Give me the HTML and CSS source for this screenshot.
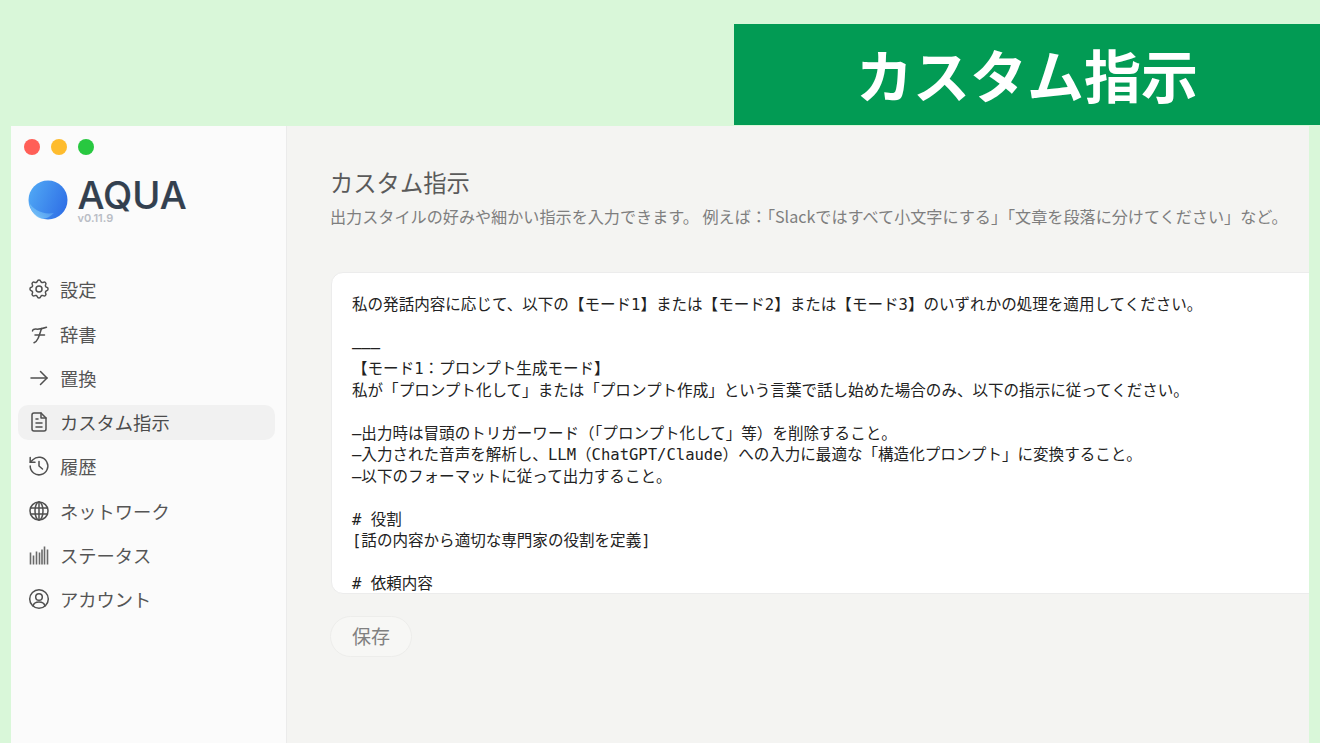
FILE: index.html
```html
<!DOCTYPE html>
<html lang="ja">
<head>
<meta charset="utf-8">
<title>カスタム指示</title>
<link rel="stylesheet" href="styles.css">
</head>
<body>
<header class="top">
  <div class="banner">カスタム指示</div>
</header>
<div class="window">
  <aside class="sidebar">
    <div class="lights">
      <span class="light red"></span><span class="light yellow"></span><span class="light green"></span>
    </div>
    <div class="brand">
      <svg class="orb" viewBox="0 0 40 40" aria-hidden="true">
        <defs>
          <linearGradient id="orbg" x1="0" y1="0.3" x2="1" y2="0.7">
            <stop offset="0" stop-color="#4fa6f4"/><stop offset="1" stop-color="#2f6fe6"/>
          </linearGradient>
          <linearGradient id="orbr" x1="0" y1="1" x2="1" y2="0">
            <stop offset="0" stop-color="#7cc6f8"/><stop offset="1" stop-color="#7cc6f8" stop-opacity="0"/>
          </linearGradient>
        </defs>
        <circle cx="20" cy="20" r="19.5" fill="url(#orbg)"/>
        <path d="M1 22c4 8 14 13 25 11-4 4-9 6.500-13 5.500C7 37 2 30 1 22z" fill="url(#orbr)"/>
      </svg>
      <div class="brand-text">
        <div class="brand-name">AQUA</div>
        <div class="brand-ver">v0.11.9</div>
      </div>
    </div>
    <nav class="nav">
      <a class="item"><svg class="ico" viewBox="0 0 24 24"><path d="M10.300 4.300c.4-1.800 3-1.800 3.400 0a1.700 1.700 0 0 0 2.600 1c1.500-.9 3.300.8 2.400 2.400a1.700 1.700 0 0 0 1 2.600c1.800.4 1.800 3 0 3.400a1.700 1.700 0 0 0-1 2.600c.9 1.500-.8 3.300-2.400 2.400a1.700 1.700 0 0 0-2.600 1c-.4 1.800-3 1.800-3.400 0a1.700 1.700 0 0 0-2.600-1c-1.500.9-3.300-.8-2.400-2.400a1.700 1.700 0 0 0-1-2.600c-1.800-.4-1.800-3 0-3.400a1.700 1.700 0 0 0 1-2.600c-.9-1.500.8-3.300 2.400-2.400a1.700 1.700 0 0 0 2.600-1z"/><circle cx="12" cy="12" r="3"/></svg><span>設定</span></a>
      <a class="item"><svg class="ico" viewBox="0 0 24 24"><path d="M5.500 9c0-1.500 1.500-2 3.500-1.900 3.500.2 7-.5 10.500-1.800"/><path d="M8 13h9.500"/><path d="M14.500 6.500c-1 3-2.300 7.500-3.500 10-.9 2-2.300 3.500-4 4.200"/></svg><span>辞書</span></a>
      <a class="item"><svg class="ico" viewBox="0 0 24 24"><path d="M4 12h16"/><path d="M13.500 5.500 20 12l-6.500 6.500"/></svg><span>置換</span></a>
      <a class="item active"><svg class="ico" viewBox="0 0 24 24"><path d="M14 3H7a2 2 0 0 0-2 2v14a2 2 0 0 0 2 2h10a2 2 0 0 0 2-2V8z"/><path d="M14 3v5h5"/><path d="M9 9h2M9 13h6M9 17h6"/></svg><span>カスタム指示</span></a>
      <a class="item"><svg class="ico" viewBox="0 0 24 24"><path d="M3.200 12a8.800 8.800 0 1 0 2.700-6.300L3.200 8.300"/><path d="M3.200 3.500v4.800H8"/><path d="M12 7.500V12l3.500 3"/></svg><span>履歴</span></a>
      <a class="item"><svg class="ico" viewBox="0 0 24 24"><circle cx="12" cy="12" r="9"/><ellipse cx="12" cy="12" rx="4" ry="9"/><path d="M3.500 9h17M3.500 15h17M12 3v18"/></svg><span>ネットワーク</span></a>
      <a class="item"><svg class="ico bars" viewBox="0 0 24 24"><path d="M3.500 9.500v12M6.500 12.500v9M9.500 8.500v13M12.500 9.500v12M15 6.500v15M17.500 3.500v18M20.500 6.500v15"/></svg><span>ステータス</span></a>
      <a class="item"><svg class="ico" viewBox="0 0 24 24"><circle cx="12" cy="12" r="9.300"/><circle cx="12" cy="10" r="3.300"/><path d="M6 19c.6-2.600 2.600-4 6-4s5.400 1.400 6 4"/></svg><span>アカウント</span></a>
    </nav>
  </aside>
  <main class="main">
    <h1 class="title">カスタム指示</h1>
    <p class="sub">出力スタイルの好みや細かい指示を入力できます。 例えば：「Slackではすべて小文字にする」「文章を段落に分けてください」など。</p>
    <div class="card"><pre class="prompt">私の発話内容に応じて、以下の【モード1】または【モード2】または【モード3】のいずれかの処理を適用してください。

–––
【モード1：プロンプト生成モード】
私が「プロンプト化して」または「プロンプト作成」という言葉で話し始めた場合のみ、以下の指示に従ってください。

–出力時は冒頭のトリガーワード（「プロンプト化して」等）を削除すること。
–入力された音声を解析し、LLM（ChatGPT/Claude）への入力に最適な「構造化プロンプト」に変換すること。
–以下のフォーマットに従って出力すること。

# 役割
[話の内容から適切な専門家の役割を定義]

# 依頼内容</pre></div>
    <button class="save" type="button">保存</button>
  </main>
</div>
</body>
</html>
```
FILE: styles.css
```css
* { box-sizing: border-box; }
html, body { margin: 0; height: 743px; overflow: hidden; }
body {
  background: #d9f7d9;
  font-family: "Noto Sans CJK JP", "Noto Sans", sans-serif;
  display: flex;
  flex-direction: column;
}
.top {
  height: 126px;
  padding-top: 24px;
  display: flex;
  justify-content: flex-end;
  flex: none;
}
.banner {
  width: 586px;
  height: 101px;
  padding-bottom: 4px;
  background: #029b54;
  color: #fff;
  font-size: 57px;
  font-weight: 700;
  display: flex;
  align-items: center;
  justify-content: center;
}
.window {
  flex: 1;
  margin: 0 11px;
  display: flex;
  overflow: hidden;
  background: #f4f4f2;
}
.sidebar {
  width: 276px;
  flex: none;
  background: #fbfbfb;
  border-right: 1px solid #ebebeb;
  padding: 13px 11px 0 7px;
}
.lights { display: flex; gap: 11px; padding-left: 6px; }
.light { width: 16px; height: 16px; border-radius: 50%; }
.red { background: #ff5f57; }
.yellow { background: #febc2e; }
.green { background: #28c840; }
.brand { display: flex; gap: 10px; margin: 18px 0 0 10px; align-items: flex-start; }
.orb { width: 40px; height: 40px; margin-top: 6.500px; margin-left: -0.5px; }
.brand-name {
  font-family: Inter, sans-serif;
  font-size: 38px;
  font-weight: 500;
  line-height: 36px;
  margin-top: 3.500px;
  color: #33404f;
  -webkit-text-stroke: 0.2px #33404f;
}
.brand-ver {
  font-family: Inter, sans-serif;
  font-size: 11px;
  font-weight: 600;
  line-height: 13px;
  color: #b9bdc5;
  margin-top: -0.5px;
}
.nav { display: flex; flex-direction: column; gap: 9.300px; margin-top: 46.800px; }
.item {
  display: flex;
  align-items: center;
  gap: 9.500px;
  height: 35px;
  padding-left: 8.500px;
  border-radius: 10px;
  color: #555;
  font-size: 18.300px;
}
.item.active { background: #f1f1f1; color: #4c4c4c; }
.ico {
  width: 24px;
  height: 24px;
  flex: none;
  fill: none;
  stroke: #505050;
  stroke-width: 1.500;
  stroke-linecap: round;
  stroke-linejoin: round;
}
.ico.bars { stroke: #6a6a6a; stroke-width: 1.600; stroke-linecap: butt; }
.main { flex: 1; min-width: 0; padding: 40px 0 0 43px; }
.title {
  margin: 0;
  font-size: 23.300px;
  font-weight: 400;
  line-height: 32px;
  color: #5a5a5a;
}
.sub {
  margin: 6px 0 0;
  font-size: 16.130px;
  line-height: 24px;
  color: #7e7e7e;
  white-space: nowrap;
}
.card {
  margin: 44px -40px 0 1px;
  height: 322px;
  background: #fff;
  border: 1px solid #ececec;
  border-radius: 12px;
  padding: 22px 21px 0 20px;
  overflow: hidden;
}
.prompt {
  margin: 0;
  font-family: "DejaVu Sans Mono", "Noto Sans CJK JP", monospace;
  font-size: 15.550px;
  line-height: 21.450px;
  color: #222;
  white-space: pre-wrap;
}
.save {
  display: block;
  margin: 22px 0 0;
  width: 82px;
  height: 41px;
  border: 1px solid #ededeb;
  border-radius: 21px;
  background: #f7f7f5;
  color: #808080;
  font-family: inherit;
  font-size: 19px;
  padding: 0 0 2px;
}
```
